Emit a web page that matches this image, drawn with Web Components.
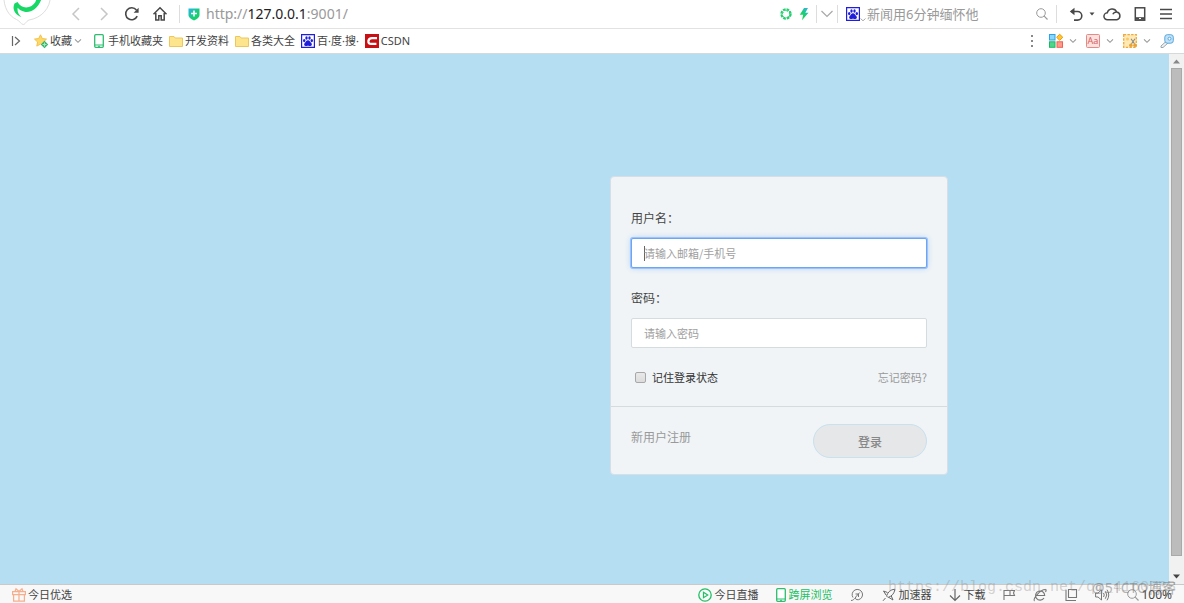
<!DOCTYPE html>
<html lang="zh-CN">
<head>
<meta charset="utf-8">
<title>登录</title>
<style>
  html, body { margin: 0; height: 100%; }
  body { font-family: "Noto Sans", "Noto Sans CJK SC", sans-serif; font-size: 11px; color: #444; overflow: hidden; }
</style>
</head>
<body>
<browser-window>
  <address-bar slot="top"></address-bar>
  <bookmark-bar slot="top"></bookmark-bar>
  <login-card></login-card>
  <status-bar slot="bottom"></status-bar>
</browser-window>

<script>
const ICONS = {
  back: [12, 14, '<path d="M9 1 3 7l6 6" fill="none" stroke="#c6c6c6" stroke-width="1.5"/>'],
  forward: [12, 14, '<path d="M3 1l6 6-6 6" fill="none" stroke="#c6c6c6" stroke-width="1.5"/>'],
  reload: [16, 16, '<path d="M13.2 10.2A6 6 0 1 1 12.4 4" fill="none" stroke="#484848" stroke-width="1.6"/><path d="M14.6 1.8v5h-5z" fill="#484848"/>'],
  home: [16, 16, '<path d="M1.5 8.2 8 1.8l6.500 6.400M3.800 7v7h3V9.800h2.400V14h3V7" fill="none" stroke="#484848" stroke-width="1.500"/>'],
  shield: [12, 14, '<defs><linearGradient id="g" x2="1" y2="1"><stop stop-color="#28b4ea"/><stop offset=".6" stop-color="#16cf70"/></linearGradient></defs><path d="M.500 1.500h11V8c0 2.500-3 4.500-5.500 5.500C3.500 12.500.500 10.500.500 8z" fill="url(#g)"/><path d="M6 3.500v6M3 6.500h6" stroke="#fff" stroke-width="1.600"/>'],
  aperture: [12, 12, '<circle cx="6" cy="6" r="4.600" fill="none" stroke="#1fd06c" stroke-width="2.200" stroke-dasharray="2.600 1.013"/><path d="M4 1.500l4 2M9.500 3l0 3.500M10 8l-3.500 1.500M5 10.500l-2.500-3M1.500 7l2-3" stroke="#1fd06c" stroke-width=".8"/>'],
  bolt: [10, 12, '<defs><linearGradient id="g" x1="1" x2="0" y2="1"><stop stop-color="#35aef0"/><stop offset=".6" stop-color="#17d35f"/></linearGradient></defs><path d="M5 0 .800 6.800h3.400L3 12.300 9.500 4.800H6.300L9 0z" fill="url(#g)"/>'],
  chevWide: [12, 8, '<path d="M.500 1l5.500 5.500L11.500 1" fill="none" stroke="#a8a8a8" stroke-width="1.200"/>'],
  chev: [8, 6, '<path d="M1 1.300l3 3 3-3" fill="none" stroke="#999" stroke-width="1.100"/>'],
  chevTiny: [6, 4, '<path d="M.500.500 3 2.800 5.500.500" fill="none" stroke="#aaa"/>'],
  baidu: [14, 14, '<path d="M.600.600h12.800v12.800H.600z" fill="#fff" stroke="#1e1edc" stroke-width="1.200"/><g fill="#1e1edc"><ellipse cx="3.200" cy="6.600" rx="1.200" ry="1.600"/><ellipse cx="5.500" cy="4" rx="1.200" ry="1.700"/><ellipse cx="8.500" cy="4" rx="1.200" ry="1.700"/><ellipse cx="10.800" cy="6.600" rx="1.200" ry="1.600"/><path d="M7 6.200c1.700 0 2.200 1.800 3.300 2.900 1.200 1.300.4 3-1 3-1 0-1.400-.4-2.300-.4s-1.300.4-2.300.4c-1.400 0-2.200-1.700-1-3C4.800 8 5.300 6.200 7 6.200z"/></g>'],
  search: [12, 12, '<circle cx="5" cy="5" r="4.300" fill="none" stroke="#9a9a9a"/><path d="M8.200 8.200l3.300 3.300" stroke="#9a9a9a" stroke-width="1.200"/>'],
  undo: [14, 14, '<path d="M2 4.500h6.500a4.300 4.300 0 0 1 0 8.600H5" fill="none" stroke="#484848" stroke-width="1.600"/><path d="M5.500.800v7.400L.800 4.500z" fill="#484848"/>'],
  caret: [6, 4, '<path d="M.500.500h5L3 3.500z" fill="#484848"/>'],
  cloud: [18, 14, '<path d="M4.600 12.800a3.500 3.500 0 0 1-.3-7 5 5 0 0 1 9.400-.8 4 4 0 0 1 .2 7.800zM9.800 7.300a4 4 0 0 1 3.800-2.300" fill="none" stroke="#484848" stroke-width="1.500"/>'],
  device: [14, 14, '<rect x="2.300" y=".800" width="9.400" height="12.400" fill="none" stroke="#484848" stroke-width="1.500"/><path d="M2 11.500h10" stroke="#484848" stroke-width="2.600"/><path d="M6 11.500h2" stroke="#fff" stroke-width="1.200"/>'],
  menu: [14, 14, '<path d="M1 2.500h12M1 7h12M1 11.500h12" stroke="#484848" stroke-width="1.600"/>'],
  expand: [10, 12, '<path d="M1.500 1v10M4 2l4.500 4L4 10" fill="none" stroke="#666" stroke-width="1.200"/>'],
  star: [14, 14, '<path d="M6.500.800 8.300 4.600l4.200.5-3.100 2.900.8 4.100-3.700-2-3.700 2 .8-4.100L.500 5.100l4.200-.5z" fill="#fdd968" stroke="#f3c04a"/><path d="M10.500 6.800 14.200 10.500l-3.700 3.700-3.700-3.700z" fill="#35b36a"/><path d="M10.500 8.500v4M8.500 10.500h4" stroke="#a5e8be" stroke-width="1.200"/>'],
  phone: [10, 14, '<rect x=".700" y=".700" width="8.600" height="12.600" rx="1" fill="#fff" stroke="#2dbd6e" stroke-width="1.300"/><path d="M1 11h8M4 12.300h2" stroke="#2dbd6e"/>'],
  folder: [14, 12, '<path d="M.500 1.500h4.500l1.200 1.500h7.300v8.500H.500z" fill="#fde58e" stroke="#edc65c"/>'],
  csdn: [14, 14, '<path d="M0 0h14v14H0z" fill="#c80f14"/><path d="M12 4.100H7Q3.800 4.100 3.400 7q-.2 2.900 2.600 2.900h5.400" fill="none" stroke="#fff" stroke-width="2.300"/>'],
  dots: [4, 14, '<path d="M1 1h2v2H1zM1 6h2v2H1zM1 11h2v2H1z" fill="#888"/>'],
  apps: [14, 14, '<rect x=".500" y=".500" width="5.500" height="5.500" fill="#8dd5fa" stroke="#2ba3ea"/><path d="M10.700.300 13.800 3.300l-3.100 3-3.100-3z" fill="#ffc62e" stroke="#e99b10"/><rect x=".500" y="7.800" width="5.500" height="5.500" fill="#4fd58a" stroke="#1db865"/><rect x="8" y="7.800" width="5.500" height="5.500" fill="#ff9a8c" stroke="#f2604f"/>'],
  letterBox: [14, 14, '<rect x=".500" y=".500" width="13" height="13" rx="1" fill="#fde1df" stroke="#e58a86"/>'],
  snip: [14, 14, '<rect x=".700" y=".700" width="12.600" height="12.600" fill="#ffeab5" stroke="#f0a93a" stroke-width="1.300" stroke-dasharray="2.500 1.200"/><circle cx="4.500" cy="5" r="1.500" fill="#fbc96d"/><path d="M8 4.800l3.500 5M12 4.800l-3.500 5" stroke="#888" stroke-width="1.100"/><circle cx="7.800" cy="11.300" r="1.700" fill="#e8a23a"/><circle cx="12" cy="11.300" r="1.700" fill="#e8a23a"/>'],
  key: [14, 14, '<path d="M6 7.500 1 12v1.500h2l5-4.500" fill="#f2f2f2" stroke="#9aa5ad"/><rect x="4.800" y=".700" width="8.500" height="8.500" rx="2.500" fill="#bfe2f8" stroke="#5aa7da"/><circle cx="9.500" cy="4.700" r="1.500" fill="#fff" stroke="#5aa7da"/>'],
  gift: [14, 14, '<g fill="none" stroke="#f6ae8c" stroke-width="1.200"><path d="M.600 3.600h12.800v3H.600zM1.600 6.600h10.800v6.600H1.600zM7 3.600v9.600M7 3.500 4 .800 3 3.500M7 3.500 10 .800l1 2.700"/></g>'],
  play: [14, 14, '<circle cx="7" cy="7" r="6.200" fill="none" stroke="#21c065" stroke-width="1.300"/><path d="M5.500 4.300 9.700 7l-4.200 2.700z" fill="none" stroke="#21c065" stroke-width="1.200"/>'],
  gauge: [14, 14, '<g fill="none" stroke="#777"><path d="M3 9.500A5.200 5.200 0 1 1 8.500 11.700c-2.500.3-3.700-1-2.800-2.700l4-4.500M1 12.500c2.500 0 3-1.500 4.500-3M5.500 6h3v3"/></g>'],
  rocket: [14, 14, '<g fill="none" stroke="#666"><path d="M4.500 8C6 4 8.500 1.500 12.800 1.200 12.500 5.500 10 8 6 9.500zM5.500 4.500 1.500 3l2.500 4M9.300 8 11 12 7 9.500M3.500 10 1 12.800"/></g>'],
  down: [12, 14, '<path d="M6 1v11M1 7.500l5 5 5-5" fill="none" stroke="#666" stroke-width="1.200"/>'],
  flag: [12, 14, '<path d="M1 12V2.500h6v5H1M7 2.500h4.500l-1 2.500 1 2.500H7" fill="none" stroke="#777" stroke-width="1.100"/>'],
  ie: [14, 14, '<path d="M2.700 7.500h9A4.600 4.600 0 1 0 11 10M1.500 13C-1 11 8 1 12.500 1.500c1 .3.5 1.800 0 2.500" fill="none" stroke="#777" stroke-width="1.100"/>'],
  windows: [12, 12, '<path d="M3.500.500h8v8h-8zM1 1v10.500h10" fill="none" stroke="#777" stroke-width="1.100"/>'],
  sound: [14, 12, '<path d="M.600 4H3l3.500-3v10L3 8H.600zM8.500 4q1.500 2 0 4M10.300 2.300q3 3.700 0 7.400M12 .700q3.500 5.300 0 10.600" fill="none" stroke="#777"/>'],
  arrowUp: [7, 5, '<path d="M0 4.500 3.500.500 7 4.500z" fill="#888"/>'],
  arrowDown: [7, 5, '<path d="M0 .500h7L3.500 4.500z" fill="#444"/>'],
  logo: [52, 25, '<path d="M3.800-5C3.500 8 9 16 16.500 19.500c3 1.300 4.500 4.500 6.500 5s3-3.300 6-4.500C41 18 50.500 9 50.500-5z" fill="#fff" stroke="#dedede"/><path d="M17.500 2C20 6 24 8.500 29 7c4-1.300 6.500-4 7.500-8h5C38 8.500 31 13 24.500 11.700c-3-.6-5.500-2-6.800-3.900-.7 3.200.6 6.700 3.600 9.200C14.500 14.500 12 8.500 14.500 3.500z" fill="#17d765"/>']
};

class UiIcon extends HTMLElement {
  connectedCallback() {
    const [w, h, body] = ICONS[this.getAttribute('name')];
    this.attachShadow({ mode: 'open' }).innerHTML =
      `<style>:host{display:inline-flex;flex:none}svg{display:block;overflow:visible}</style>
       <svg width="${w}" height="${h}" viewBox="0 0 ${w} ${h}" aria-hidden="true">${body}</svg>`;
  }
}

const define = (name, html) => {
  const template = document.createElement('template');
  template.innerHTML = html;
  customElements.define(name, class extends HTMLElement {
    constructor() {
      super();
      this.attachShadow({ mode: 'open' }).append(template.content.cloneNode(true));
    }
  });
};

const BASE = `
  * { box-sizing: border-box; }
  button { appearance: none; border: 0; background: none; padding: 0; margin: 0; font: inherit; color: inherit; display: flex; align-items: center; justify-content: center; flex: none; white-space: nowrap; }
  a { color: inherit; text-decoration: none; white-space: nowrap; }
  input { font: inherit; }
`;

customElements.define('ui-icon', UiIcon);

define('address-bar', `
<style>${BASE}
  :host { display: flex; align-items: center; height: 29px; border-bottom: 1px solid #e2e2e2; background: #fff; padding-right: 11px; box-sizing: border-box; }
  .logo { width: 62px; align-self: flex-start; justify-content: flex-start; }
  .nav { width: 28px; height: 28px; }
  .sep { flex: none; width: 1px; height: 18px; background: #ddd; }
  .address { display: flex; align-items: center; gap: 6px; flex: 1; min-width: 0; margin-left: 5px; }
  .address .sep { margin-right: 2px; }
  .url { font-size: 14px; line-height: 20px; color: #999; outline: 0; white-space: nowrap; }
  .url b { font-weight: 400; color: #222; }
  .quick { display: flex; align-items: center; gap: 7px; }
  .quick .sep { margin-right: -3px; }
  .quick .sep + button { margin-right: -3px; }
  .search { display: flex; align-items: center; width: 202px; margin: 0 8px 0 11px; }
  .search input { flex: 1; min-width: 0; border: 0; padding: 0; margin: 0 2px 0 1px; outline: 0; background: none; font-size: 13px; height: 20px; }
  .search input::placeholder { color: #999; opacity: 1; }
  .search .more { align-self: flex-end; padding-bottom: 2px; }
  .tools { display: flex; align-items: center; gap: 12px; margin-left: 12px; }
  .undo { gap: 6px; margin-right: -4px; }
</style>
<button class="logo" aria-label="主页菜单"><ui-icon name="logo"></ui-icon></button>
<button class="nav" aria-label="后退"><ui-icon name="back"></ui-icon></button>
<button class="nav" aria-label="前进"><ui-icon name="forward"></ui-icon></button>
<button class="nav" aria-label="刷新"><ui-icon name="reload"></ui-icon></button>
<button class="nav" aria-label="主页"><ui-icon name="home"></ui-icon></button>
<div class="address"><span class="sep"></span><ui-icon name="shield"></ui-icon>
  <div class="url" role="textbox" aria-label="地址" contenteditable="true" spellcheck="false">http://<b>127.0.0.1</b>:9001/</div></div>
<div class="quick">
  <button aria-label="兼容"><ui-icon name="aperture"></ui-icon></button>
  <button aria-label="极速模式"><ui-icon name="bolt"></ui-icon></button>
  <span class="sep"></span>
  <button aria-label="展开"><ui-icon name="chevWide"></ui-icon></button>
  <span class="sep"></span>
</div>
<form class="search" role="search">
  <ui-icon name="baidu"></ui-icon><ui-icon class="more" name="chevTiny"></ui-icon>
  <input type="text" aria-label="搜索" placeholder="新闻用6分钟缅怀他">
  <button type="button" aria-label="搜索"><ui-icon name="search"></ui-icon></button>
</form>
<span class="sep"></span>
<div class="tools">
  <button class="undo" aria-label="撤销"><ui-icon name="undo"></ui-icon><ui-icon name="caret"></ui-icon></button>
  <button aria-label="云"><ui-icon name="cloud"></ui-icon></button>
  <button aria-label="手机"><ui-icon name="device"></ui-icon></button>
  <button aria-label="菜单"><ui-icon name="menu"></ui-icon></button>
</div>`);

define('bookmark-bar', `
<style>${BASE}
  :host { display: flex; align-items: center; justify-content: space-between; height: 25px; padding: 0 10px 0 11px; box-sizing: border-box; background: #fff; border-bottom: 1px solid #d4d9dc; line-height: 16px; color: #444; }
  nav, .tools { display: flex; align-items: center; }
  nav { gap: 6px; }
  nav a, nav button { display: flex; align-items: center; gap: 2px; }
  .first { margin-right: 7px; }
  .menu { margin-right: 6px; }
  .phone { gap: 4px; }
  .tools { gap: 9px; }
  .tools button { gap: 6px; }
  .more { margin-right: 6px; }
  .letter { position: relative; }
  .letter span { position: absolute; left: 0; width: 14px; text-align: center; font-size: 9px; line-height: 14px; color: #d5605c; }
</style>
<nav>
  <button class="first" aria-label="展开书签"><ui-icon name="expand"></ui-icon></button>
  <button class="menu"><ui-icon name="star"></ui-icon>收藏<ui-icon name="chev"></ui-icon></button>
  <a class="phone" href="#"><ui-icon name="phone"></ui-icon>手机收藏夹</a>
  <a href="#"><ui-icon name="folder"></ui-icon>开发资料</a>
  <a href="#"><ui-icon name="folder"></ui-icon>各类大全</a>
  <a href="#"><ui-icon name="baidu"></ui-icon>百·度·搜·</a>
  <a href="#"><ui-icon name="csdn"></ui-icon>CSDN</a>
</nav>
<div class="tools">
  <button class="more" aria-label="更多"><ui-icon name="dots"></ui-icon></button>
  <button aria-label="扩展"><ui-icon name="apps"></ui-icon><ui-icon name="chev"></ui-icon></button>
  <button class="letter" aria-label="翻译"><ui-icon name="letterBox"></ui-icon><span>Aa</span><ui-icon name="chev"></ui-icon></button>
  <button aria-label="截图"><ui-icon name="snip"></ui-icon><ui-icon name="chev"></ui-icon></button>
  <button aria-label="密码"><ui-icon name="key"></ui-icon></button>
</div>`);

define('login-card', `
<style>${BASE}
  :host { display: block; width: 338px; background: #f0f4f7; border: 1px solid #d5dfe5; border-radius: 4px; box-sizing: border-box; color: #444; font-family: "Noto Sans CJK SC", sans-serif; }
  .fields { display: grid; gap: 20px; padding: 31px 20px 19px; }
  .field { display: grid; gap: 10px; }
  .field label { font-size: 12px; line-height: 20px; }
  .field input { width: 100%; height: 30px; border: 1px solid #d5dce0; border-radius: 2px; padding: 0 12px; background: #fff; font-size: 11px; outline: 0; }
  .field input::placeholder { color: #a0a0a0; opacity: 1; }
  .field input.active { border-color: #6ea4f4; box-shadow: 0 0 0 1px #9cc3fa, 0 0 6px #a9cdf2; background: linear-gradient(#666, #666) 12px center / 1px 15px no-repeat #fff; }
  .row { display: flex; justify-content: space-between; line-height: 18px; }
  .remember { display: flex; align-items: center; gap: 6px; color: #333; }
  .remember input { appearance: none; width: 11px; height: 11px; margin: 0 0 0 4px; border: 1px solid #a8a8a8; border-radius: 2px; background: linear-gradient(#e9e9e9, #dcdcdc); }
  .forgot, .register { color: #999; }
  footer { display: flex; justify-content: space-between; padding: 17px 20px 16px; border-top: 1px solid #d5dce0; }
  .fields { padding-bottom: 20px; }
  .register { font-size: 12px; line-height: 26px; }
  footer button { width: 114px; height: 34px; border: 1px solid #c7e1ee; border-radius: 17px; background: #e6e7e8; color: #888; font-size: 12px; font-weight: 500; }
</style>
<form>
  <div class="fields">
    <div class="field"><label for="user">用户名：</label><input id="user" class="active" type="text" placeholder="请输入邮箱/手机号"></div>
    <div class="field"><label for="pass">密码：</label><input id="pass" type="password" placeholder="请输入密码"></div>
    <div class="row"><label class="remember"><input type="checkbox">记住登录状态</label><a class="forgot" href="#">忘记密码?</a></div>
  </div>
  <footer><a class="register" href="#">新用户注册</a><button type="button">登录</button></footer>
</form>`);

define('scroll-bar', `
<style>
  :host { display: flex; flex-direction: column; align-items: center; flex: none; width: 15px; padding: 5px 0; gap: 4px; box-sizing: border-box; background: #f1f1f1; }
  .track { flex: 1; align-self: stretch; padding: 0 2px 14px; display: flex; }
  .thumb { flex: 1; background: #bcbcbc; border: 1px solid #a9a9a9; }
</style>
<ui-icon name="arrowUp"></ui-icon><div class="track"><div class="thumb"></div></div><ui-icon name="arrowDown"></ui-icon>`);

define('status-bar', `
<style>${BASE}
  :host { display: flex; align-items: center; justify-content: space-between; height: 19px; padding: 2px 12px 0; box-sizing: border-box; background: #f8f8f8; border-top: 1px solid #c9c9c9; line-height: 16px; color: #444; }
  button { gap: 2px; }
  .group { display: flex; align-items: center; gap: 18px; }
  .green { color: #21c065; }
  .zoom { font-size: 12px; }
</style>
<button><ui-icon name="gift"></ui-icon>今日优选</button>
<div class="group">
  <button><ui-icon name="play"></ui-icon>今日直播</button>
  <button class="green"><ui-icon name="phone"></ui-icon>跨屏浏览</button>
  <button aria-label="医生"><ui-icon name="gauge"></ui-icon></button>
  <button><ui-icon name="rocket"></ui-icon>加速器</button>
  <button><ui-icon name="down"></ui-icon>下载</button>
  <button aria-label="标记"><ui-icon name="flag"></ui-icon></button>
  <button aria-label="内核"><ui-icon name="ie"></ui-icon></button>
  <button aria-label="窗口"><ui-icon name="windows"></ui-icon></button>
  <button aria-label="声音"><ui-icon name="sound"></ui-icon></button>
  <button class="zoom"><ui-icon name="search"></ui-icon>100%</button>
</div>`);

define('water-mark', `
<style>
  :host { position: absolute; right: 8px; bottom: 5px; width: 288px; height: 20px; pointer-events: none; white-space: nowrap; line-height: 20px; }
  span { position: absolute; top: 0; }
  .url { left: 0; font-family: "Liberation Mono", monospace; font-size: 15px; color: rgba(150, 145, 140, .4); }
  .site { right: 0; font-size: 14px; color: rgba(110, 110, 110, .5); }
</style>
<span class="url">https://blog.csdn.net/qq_4160738</span><span class="site">@51CTO博客</span>`);

define('browser-window', `
<style>
  :host { position: relative; display: flex; flex-direction: column; height: 100vh; overflow: hidden; }
  .view { flex: 1; min-height: 0; display: flex; background: #b5def2; }
  main { flex: 1; min-width: 0; display: flex; justify-content: flex-end; align-items: flex-start; padding: 122px calc(19% - 4px) 0 0; box-sizing: border-box; }
</style>
<slot name="top"></slot>
<div class="view"><main><slot></slot></main><scroll-bar></scroll-bar></div>
<slot name="bottom"></slot>
<water-mark></water-mark>`);
</script>
</body>
</html>
